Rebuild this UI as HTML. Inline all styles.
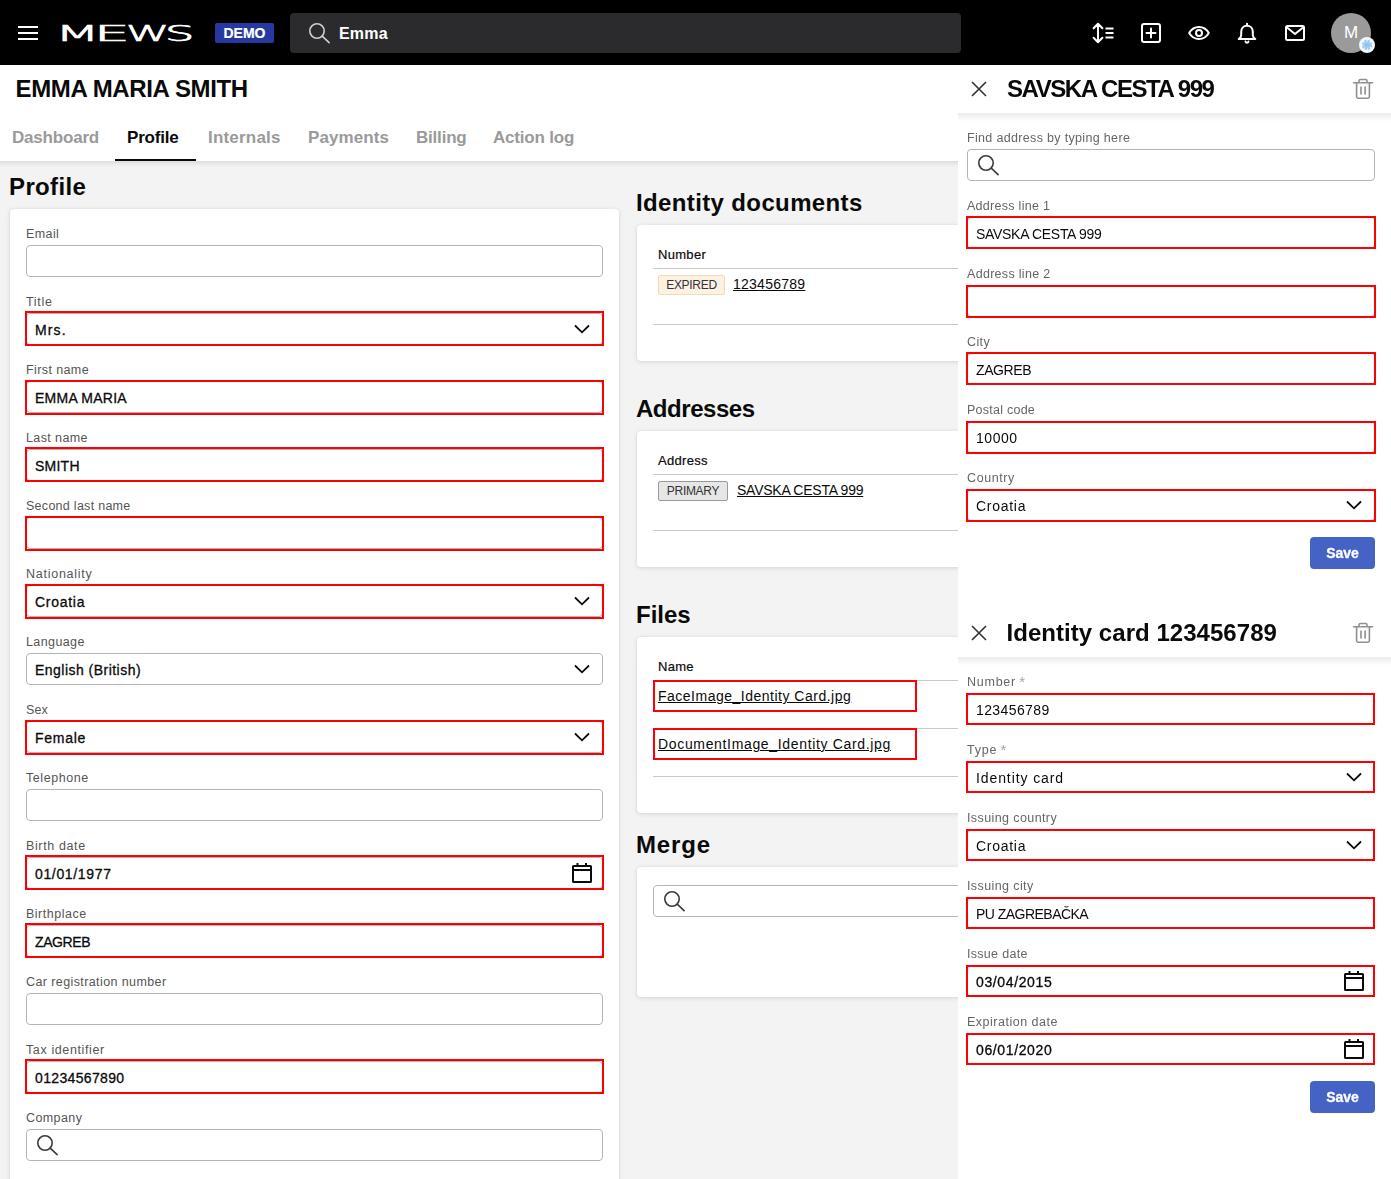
<!DOCTYPE html>
<html lang="en">
<head>
<meta charset="utf-8">
<title>Emma Maria Smith - Profile</title>
<style>
*{box-sizing:border-box;margin:0;padding:0}
html,body{width:1391px;height:1179px;overflow:hidden}
body{position:relative;background:#f3f3f3;font-family:"Liberation Sans",sans-serif;color:#0a0a0a;font-size:14px}
.abs{position:absolute}
/* top bar */
#top{position:absolute;left:0;top:0;width:1391px;height:65px;background:#000}
#burger i{position:absolute;left:18px;width:20px;height:2px;background:#fff}
#logo{position:absolute;left:50px;top:20px}
#demo{position:absolute;left:215px;top:23px;width:59px;height:20px;background:#2539a0;border-radius:2px;color:#fff;font-weight:bold;font-size:14px;line-height:20px;text-align:center;letter-spacing:0;-webkit-text-stroke:.2px #fff}
#search{position:absolute;left:290px;top:13px;width:671px;height:40px;background:#2b2b2d;border-radius:4px}
#search span{position:absolute;left:49px;top:1px;letter-spacing:.2px;line-height:40px;color:#fff;font-size:16px;font-weight:bold}
#search svg{position:absolute;left:17px;top:9px}
.ti{position:absolute;top:21px;width:24px;height:24px}
#avatar{position:absolute;left:1331px;top:13px;width:40px;height:40px;border-radius:50%;background:#9a9a9a;color:#fff;font-size:17px;line-height:40px;text-align:center}
#avbadge{position:absolute;left:1359px;top:37px;width:16px;height:16px;border-radius:50%;background:#f2f8fd}
/* header */
#hdr{position:absolute;left:0;top:65px;width:1391px;height:96px;background:#fff}
#hdr::after{content:"";position:absolute;left:0;top:96px;width:958px;height:6px;background:linear-gradient(rgba(0,0,0,.09),rgba(0,0,0,.03) 60%,rgba(0,0,0,0))}
#hdr h1{position:absolute;left:15.5px;top:9px;font-size:24px;line-height:30px;font-weight:bold;white-space:nowrap;letter-spacing:-.37px}
.tab{position:absolute;top:60px;font-size:17px;line-height:26px;font-weight:bold;color:#9a9a9a;white-space:nowrap;letter-spacing:-.2px}
.tab.on{color:#0a0a0a}
#tabline{position:absolute;left:115px;top:94px;width:81px;height:2px;background:#0a0a0a}
/* main */
h2{position:absolute;font-size:24px;line-height:30px;font-weight:bold;white-space:nowrap;letter-spacing:.37px;margin-left:-1px}
.card{position:absolute;background:#fff;border-radius:4px;box-shadow:0 1px 5px rgba(0,0,0,.12),0 0 2px rgba(0,0,0,.06)}
.lb{position:absolute;font-size:12.5px;line-height:16px;color:#555;white-space:nowrap;letter-spacing:.4px}
.lb.pl{color:#666}
.lb i{font-style:normal;color:#a5a5a5;font-size:15px;line-height:12px;position:relative;top:1px;margin-left:-1px}
.in{position:absolute;height:32px;border:1px solid #b5b5b5;border-radius:4px;background:#fff;font-size:14px;line-height:32px;padding-left:8px;white-space:nowrap;color:#0a0a0a;letter-spacing:.55px;-webkit-text-stroke:.3px #0a0a0a}
.in.uc{letter-spacing:-.4px}
.in.dg{letter-spacing:.15px}
.in.pn{-webkit-text-stroke:0}
.red{position:absolute;border:2px solid #f00;pointer-events:none}
.chev{position:absolute;right:12px;top:10px}
.cal{position:absolute;right:9px;top:4px}
.mag{position:absolute;left:8px;top:4px}
.th{position:absolute;font-size:13px;line-height:16px;color:#0a0a0a;white-space:nowrap;letter-spacing:.3px;-webkit-text-stroke:.2px #0a0a0a}
.hr{position:absolute;height:1px;background:#c9c9c9}
.lnk{position:absolute;font-size:14px;line-height:20px;text-decoration:underline;text-underline-offset:1px;white-space:nowrap;color:#0a0a0a;letter-spacing:.5px}
.lnk.dg{letter-spacing:.25px}
.lnk.uc{letter-spacing:-.25px}
.bdg{position:absolute;height:20px;font-size:12px;line-height:18px;text-align:center;border-radius:2px;color:#333;letter-spacing:-.3px}
/* panel */
#panel{will-change:transform;position:absolute;left:958px;top:65px;width:433px;height:1114px;background:#fff}
.ph{position:absolute;left:0;width:433px;height:48px;background:#fff}
.ph::after{content:"";position:absolute;left:0;top:48px;width:433px;height:9px;background:linear-gradient(rgba(0,0,0,.08),rgba(0,0,0,.03) 55%,rgba(0,0,0,0))}
.ph b{position:absolute;left:48.500px;top:9px;letter-spacing:.04px;font-size:24px;line-height:30px;white-space:nowrap}
.ph b.uc{letter-spacing:-1.43px;left:49px}
.save{position:absolute;left:352px;width:65px;height:32px;background:#4563c4;border-radius:4px;color:#fff;font-weight:bold;font-size:14px;line-height:32px;text-align:center;-webkit-text-stroke:.3px #fff}
</style>
</head>
<body>
<div id="top">
<div id="burger"><i style="top:26px"></i><i style="top:32px"></i><i style="top:38px"></i></div>
<svg id="logo" width="150" height="26" viewBox="0 0 150 26" role="img" aria-label="MEWS"><title>MEWS</title><text y="20.6" font-family="'DejaVu Sans Light','DejaVu Sans','Liberation Sans',sans-serif" font-weight="200" font-size="20.6" fill="#fff" stroke="#fff" stroke-width=".7"><tspan x="5.1" textLength="44.8" lengthAdjust="spacingAndGlyphs">M</tspan><tspan x="44" textLength="35.7" lengthAdjust="spacingAndGlyphs">E</tspan><tspan x="75.9" textLength="43.3" lengthAdjust="spacingAndGlyphs">W</tspan><tspan x="114.7" textLength="29.7" lengthAdjust="spacingAndGlyphs">S</tspan></text></svg>
<div id="demo">DEMO</div>
<div id="search"><svg width="24" height="24" viewBox="0 0 24 24" fill="none" stroke="#cfcfcf" stroke-width="1.6" stroke-linecap="round"><circle cx="10" cy="9" r="7.200"/><path d="M15.200 14.200 22.100 20.700"/></svg><span>Emma</span></div>
<svg class="ti" style="left:1091px" viewBox="0 0 24 24" fill="none" stroke="#fff" stroke-width="2" stroke-linecap="round" stroke-linejoin="round"><path d="M7 3v18M2.6 7.2 7 2.8l4.4 4.4M2.6 16.8 7 21.2l4.4-4.4"/><path d="M14.5 7.5h8M14.5 12h8M14.5 16.5h8" stroke-linecap="butt"/></svg>
<svg class="ti" style="left:1139px" viewBox="0 0 24 24" fill="none" stroke="#fff" stroke-width="2" stroke-linecap="round"><rect x="3" y="3" width="18" height="18" rx="2"/><path d="M12 7.5v9M7.5 12h9"/></svg>
<svg class="ti" style="left:1187px" viewBox="0 0 24 24" fill="none" stroke="#fff" stroke-width="2" stroke-linejoin="round"><path d="M2.2 12c2.2-3.8 5.6-6 9.8-6s7.600 2.200 9.800 6c-2.200 3.800-5.600 6-9.800 6s-7.600-2.200-9.800-6z"/><circle cx="12" cy="12" r="3"/></svg>
<svg class="ti" style="left:1235px" viewBox="0 0 24 24" fill="none" stroke="#fff" stroke-width="2" stroke-linecap="round" stroke-linejoin="round"><path d="M12 2.700v1.500M6.200 11c0-3.700 2.400-6.200 5.800-6.200s5.800 2.500 5.800 6.200v3.300c0 1.600.9 2.700 2.500 3.700H3.700c1.600-1 2.500-2.100 2.500-3.700z"/><path d="M10.500 20.500c.3.800.8 1.200 1.500 1.200s1.200-.4 1.500-1.200"/></svg>
<svg class="ti" style="left:1283px" viewBox="0 0 24 24" fill="none" stroke="#fff" stroke-width="2" stroke-linejoin="round"><rect x="3" y="5" width="18" height="14" rx="1.500"/><path d="M4 6.500l8 6.500 8-6.500"/></svg>
<div id="avatar">M</div>
<div id="avbadge"><svg width="16" height="16" viewBox="0 0 16 16"><circle cx="8" cy="8" r="3.600" fill="none" stroke="#9ccbf3" stroke-width="3.200" stroke-dasharray="1.900 .93"/><circle cx="8" cy="8" r="3.400" fill="#9ccbf3"/><rect x="6" y="7.500" width="4" height="1" fill="#7fb6ea"/></svg></div>
</div>
<div id="hdr">
<h1>EMMA MARIA SMITH</h1>
<span class="tab" style="left:12px">Dashboard</span>
<span class="tab on" style="left:127px">Profile</span>
<span class="tab" style="left:208px;letter-spacing:.2px">Internals</span>
<span class="tab" style="left:308px;letter-spacing:.1px">Payments</span>
<span class="tab" style="left:416px">Billing</span>
<span class="tab" style="left:493px">Action log</span>
<div id="tabline"></div>
</div>
<h2 style="left:10px;top:172px">Profile</h2>
<div class="card" id="lc" style="left:10px;top:209px;width:609px;height:990px">
<span class="lb" style="left:16px;top:17px">Email</span>
<div class="in" style="left:16px;top:36px;width:577px"></div>
<span class="lb" style="left:16px;top:85px;letter-spacing:0.7px">Title</span>
<div class="in" style="left:16px;top:104px;width:577px;letter-spacing:1.15px">Mrs.<svg class="chev" width="16" height="10" viewBox="0 0 16 10" fill="none" stroke="#0a0a0a" stroke-width="1.800"><path d="M1 1.500 8 8.300 15 1.500"/></svg></div>
<div class="red" style="left:15px;top:102px;width:579px;height:35px"></div>
<span class="lb" style="left:16px;top:153px">First name</span>
<div class="in uc" style="left:16px;top:172px;width:577px;letter-spacing:0.25px">EMMA MARIA</div>
<div class="red" style="left:15px;top:171px;width:579px;height:35px"></div>
<span class="lb" style="left:16px;top:221px">Last name</span>
<div class="in uc" style="left:16px;top:240px;width:577px;letter-spacing:0.24px">SMITH</div>
<div class="red" style="left:15px;top:238px;width:579px;height:35px"></div>
<span class="lb" style="left:16px;top:289px;letter-spacing:0.28px">Second last name</span>
<div class="in" style="left:16px;top:308px;width:577px"></div>
<div class="red" style="left:15px;top:307px;width:579px;height:35px"></div>
<span class="lb" style="left:16px;top:357px;letter-spacing:0.74px">Nationality</span>
<div class="in" style="left:16px;top:376px;width:577px;letter-spacing:0.72px">Croatia<svg class="chev" width="16" height="10" viewBox="0 0 16 10" fill="none" stroke="#0a0a0a" stroke-width="1.800"><path d="M1 1.500 8 8.300 15 1.500"/></svg></div>
<div class="red" style="left:15px;top:375px;width:579px;height:35px"></div>
<span class="lb" style="left:16px;top:425px">Language</span>
<div class="in" style="left:16px;top:444px;width:577px;letter-spacing:0.47px">English (British)<svg class="chev" width="16" height="10" viewBox="0 0 16 10" fill="none" stroke="#0a0a0a" stroke-width="1.800"><path d="M1 1.500 8 8.300 15 1.500"/></svg></div>
<span class="lb" style="left:16px;top:493px;letter-spacing:0.1px">Sex</span>
<div class="in" style="left:16px;top:512px;width:577px;letter-spacing:0.72px">Female<svg class="chev" width="16" height="10" viewBox="0 0 16 10" fill="none" stroke="#0a0a0a" stroke-width="1.800"><path d="M1 1.500 8 8.300 15 1.500"/></svg></div>
<div class="red" style="left:15px;top:511px;width:579px;height:35px"></div>
<span class="lb" style="left:16px;top:561px;letter-spacing:0.57px">Telephone</span>
<div class="in" style="left:16px;top:580px;width:577px"></div>
<span class="lb" style="left:16px;top:629px;letter-spacing:0.62px">Birth date</span>
<div class="in dg" style="left:16px;top:648px;width:577px;letter-spacing:0.65px">01/01/1977<svg class="cal" width="22" height="22" viewBox="0 0 22 22" fill="none" stroke="#0a0a0a" stroke-width="2"><rect x="2" y="4" width="18" height="16" rx=".5"/><path d="M2 8h18M6.500 1v3M15 1v3"/></svg></div>
<div class="red" style="left:15px;top:646px;width:579px;height:35px"></div>
<span class="lb" style="left:16px;top:697px;letter-spacing:0.5px">Birthplace</span>
<div class="in uc" style="left:16px;top:716px;width:577px;letter-spacing:-0.4px">ZAGREB</div>
<div class="red" style="left:15px;top:714px;width:579px;height:35px"></div>
<span class="lb" style="left:16px;top:765px">Car registration number</span>
<div class="in" style="left:16px;top:784px;width:577px"></div>
<span class="lb" style="left:16px;top:833px;letter-spacing:0.62px">Tax identifier</span>
<div class="in dg" style="left:16px;top:852px;width:577px;letter-spacing:0.35px">01234567890</div>
<div class="red" style="left:15px;top:850px;width:579px;height:35px"></div>
<span class="lb" style="left:16px;top:901px">Company</span>
<div class="in" style="left:16px;top:920px;width:577px"><svg class="mag" width="24" height="24" viewBox="0 0 24 24" fill="none" stroke="#3a3a3a" stroke-width="1.600" stroke-linecap="round"><circle cx="10" cy="9" r="7.200"/><path d="M15.200 14.200 22.100 20.700"/></svg></div>
</div>
<h2 style="left:637px;top:188px">Identity documents</h2>
<div class="card" style="left:637px;top:225px;width:609px;height:136px">
<span class="th" style="left:21px;top:22px">Number</span>
<div class="hr" style="left:16px;top:43px;width:577px"></div>
<span class="bdg" style="left:21px;top:50px;width:67px;background:#fdf1e3;border:1px solid #f6d9b3">EXPIRED</span>
<span class="lnk dg" style="left:96px;top:49px">123456789</span>
<div class="hr" style="left:16px;top:99px;width:577px"></div>
</div>
<h2 style="left:637px;top:394px;letter-spacing:-.46px">Addresses</h2>
<div class="card" style="left:637px;top:431px;width:609px;height:136px">
<span class="th" style="left:21px;top:22px">Address</span>
<div class="hr" style="left:16px;top:43px;width:577px"></div>
<span class="bdg" style="left:21px;top:50px;width:70px;background:#e6e6e6;border:1px solid #9a9a9a">PRIMARY</span>
<span class="lnk uc" style="left:100px;top:49px">SAVSKA CESTA 999</span>
<div class="hr" style="left:16px;top:99px;width:577px"></div>
</div>
<h2 style="left:637px;top:600px;letter-spacing:0">Files</h2>
<div class="card" style="left:637px;top:637px;width:609px;height:176px">
<span class="th" style="left:21px;top:22px">Name</span>
<div class="hr" style="left:16px;top:43px;width:577px"></div>
<span class="lnk" style="left:21px;top:49px">FaceImage_Identity Card.jpg</span>
<div class="red" style="left:16px;top:43px;width:264px;height:32px"></div>
<div class="hr" style="left:16px;top:91px;width:577px"></div>
<span class="lnk" style="left:21px;top:97px;letter-spacing:.66px">DocumentImage_Identity Card.jpg</span>
<div class="red" style="left:16px;top:91px;width:264px;height:32px"></div>
<div class="hr" style="left:16px;top:139px;width:577px"></div>
</div>
<h2 style="left:637px;top:830px;letter-spacing:.87px">Merge</h2>
<div class="card" style="left:637px;top:867px;width:609px;height:130px">
<div class="in" style="left:16px;top:18px;width:577px"><svg class="mag" width="24" height="24" viewBox="0 0 24 24" fill="none" stroke="#3a3a3a" stroke-width="1.600" stroke-linecap="round"><circle cx="10" cy="9" r="7.200"/><path d="M15.200 14.200 22.100 20.700"/></svg></div>
</div>
<div id="panel">
<span class="lb pl" style="left:9px;top:65px;letter-spacing:0.33px">Find address by typing here</span>
<div class="in pn" style="left:9px;top:84px;width:408px"><svg class="mag" width="24" height="24" viewBox="0 0 24 24" fill="none" stroke="#3a3a3a" stroke-width="1.600" stroke-linecap="round"><circle cx="10" cy="9" r="7.200"/><path d="M15.200 14.200 22.100 20.700"/></svg></div>
<span class="lb pl" style="left:9px;top:133px;letter-spacing:0.28px">Address line 1</span>
<div class="in pn uc" style="left:9px;top:152px;width:408px;letter-spacing:-0.3px">SAVSKA CESTA 999</div>
<div class="red" style="left:8px;top:151px;width:410px;height:33px"></div>
<span class="lb pl" style="left:9px;top:201px;letter-spacing:0.3px">Address line 2</span>
<div class="in pn" style="left:9px;top:220px;width:408px"></div>
<div class="red" style="left:8px;top:220px;width:410px;height:33px"></div>
<span class="lb pl" style="left:9px;top:269px">City</span>
<div class="in pn uc" style="left:9px;top:288px;width:408px;letter-spacing:-0.4px">ZAGREB</div>
<div class="red" style="left:8px;top:287px;width:410px;height:33px"></div>
<span class="lb pl" style="left:9px;top:337px;letter-spacing:0.25px">Postal code</span>
<div class="in pn dg" style="left:9px;top:356px;width:408px;letter-spacing:0.55px">10000</div>
<div class="red" style="left:8px;top:356px;width:410px;height:33px"></div>
<span class="lb pl" style="left:9px;top:405px;letter-spacing:0.6px">Country</span>
<div class="in pn" style="left:9px;top:424px;width:408px;letter-spacing:0.72px">Croatia<svg class="chev" width="16" height="10" viewBox="0 0 16 10" fill="none" stroke="#0a0a0a" stroke-width="1.800"><path d="M1 1.500 8 8.300 15 1.500"/></svg></div>
<div class="red" style="left:8px;top:424px;width:410px;height:33px"></div>
<div class="save" style="top:472px">Save</div>
<span class="lb pl" style="left:9px;top:609px;letter-spacing:0.75px">Number <i>*</i></span>
<div class="in pn dg" style="left:9px;top:628px;width:408px;letter-spacing:0.4px">123456789</div>
<div class="red" style="left:8px;top:628px;width:409px;height:32px"></div>
<span class="lb pl" style="left:9px;top:677px;letter-spacing:0.8px">Type <i>*</i></span>
<div class="in pn" style="left:9px;top:696px;width:408px;letter-spacing:0.9px">Identity card<svg class="chev" width="16" height="10" viewBox="0 0 16 10" fill="none" stroke="#0a0a0a" stroke-width="1.800"><path d="M1 1.500 8 8.300 15 1.500"/></svg></div>
<div class="red" style="left:8px;top:696px;width:409px;height:32px"></div>
<span class="lb pl" style="left:9px;top:745px">Issuing country</span>
<div class="in pn" style="left:9px;top:764px;width:408px;letter-spacing:0.72px">Croatia<svg class="chev" width="16" height="10" viewBox="0 0 16 10" fill="none" stroke="#0a0a0a" stroke-width="1.800"><path d="M1 1.500 8 8.300 15 1.500"/></svg></div>
<div class="red" style="left:8px;top:764px;width:409px;height:32px"></div>
<span class="lb pl" style="left:9px;top:813px">Issuing city</span>
<div class="in pn uc" style="left:9px;top:832px;width:408px;letter-spacing:-0.53px">PU ZAGREBAČKA</div>
<div class="red" style="left:8px;top:832px;width:409px;height:32px"></div>
<span class="lb pl" style="left:9px;top:881px;letter-spacing:0.3px">Issue date</span>
<div class="in dg" style="left:9px;top:900px;width:408px;letter-spacing:0.63px">03/04/2015<svg class="cal" width="22" height="22" viewBox="0 0 22 22" fill="none" stroke="#0a0a0a" stroke-width="2"><rect x="2" y="4" width="18" height="16" rx=".5"/><path d="M2 8h18M6.500 1v3M15 1v3"/></svg></div>
<div class="red" style="left:8px;top:900px;width:409px;height:32px"></div>
<span class="lb pl" style="left:9px;top:949px;letter-spacing:0.5px">Expiration date</span>
<div class="in dg" style="left:9px;top:968px;width:408px;letter-spacing:0.63px">06/01/2020<svg class="cal" width="22" height="22" viewBox="0 0 22 22" fill="none" stroke="#0a0a0a" stroke-width="2"><rect x="2" y="4" width="18" height="16" rx=".5"/><path d="M2 8h18M6.500 1v3M15 1v3"/></svg></div>
<div class="red" style="left:8px;top:968px;width:409px;height:32px"></div>
<div class="save" style="top:1016px">Save</div>
<div class="ph" style="top:0"><svg class="abs" style="left:9px;top:12px" width="24" height="24" viewBox="0 0 24 24" fill="none" stroke="#333" stroke-width="1.600"><path d="M5 5l14 14M19 5 5 19"/></svg><b class="uc">SAVSKA CESTA 999</b><svg class="abs" style="left:393px;top:12px" width="24" height="24" viewBox="0 0 24 24" fill="none" stroke="#8f8f8f" stroke-width="1.600" stroke-linecap="round" stroke-linejoin="round"><path d="M2.500 5.800h19M8 5.600V4a1.500 1.500 0 0 1 1.500-1.500h5A1.500 1.500 0 0 1 16 4v1.600M5.600 6v13.500a1.800 1.800 0 0 0 1.800 1.800h9.200a1.800 1.800 0 0 0 1.800-1.800V6M10 10v7M14.100 10v7"/></svg></div>
<div class="ph" style="top:544px"><svg class="abs" style="left:9px;top:12px" width="24" height="24" viewBox="0 0 24 24" fill="none" stroke="#333" stroke-width="1.600"><path d="M5 5l14 14M19 5 5 19"/></svg><b>Identity card 123456789</b><svg class="abs" style="left:393px;top:12px" width="24" height="24" viewBox="0 0 24 24" fill="none" stroke="#8f8f8f" stroke-width="1.600" stroke-linecap="round" stroke-linejoin="round"><path d="M2.500 5.800h19M8 5.600V4a1.500 1.500 0 0 1 1.500-1.500h5A1.500 1.500 0 0 1 16 4v1.600M5.600 6v13.500a1.800 1.800 0 0 0 1.800 1.800h9.200a1.800 1.800 0 0 0 1.800-1.800V6M10 10v7M14.100 10v7"/></svg></div>
</div>
</body>
</html>
